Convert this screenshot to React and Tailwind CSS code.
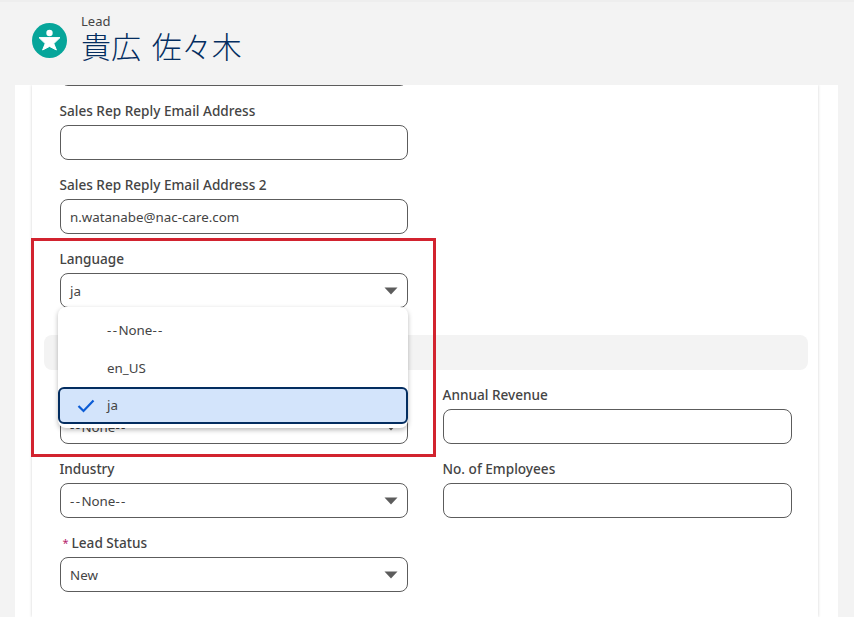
const font = { fontFamily: '"Noto Sans", "Noto Sans CJK JP", sans-serif' };

function Value({ text }) {
  if (text === "--None--") {
    return (
      <span>
        <span className="tracking-[1.4px]">--</span>None<span className="tracking-[1.4px]">--</span>
      </span>
    );
  }
  return <span>{text}</span>;
}

function Label({ children, required }) {
  return (
    <div className="h-[15px] mb-[7px] -ml-[0.5px] flex items-center text-[13.6px] leading-[15px] font-medium text-[#444444] whitespace-nowrap">
      {required && <span className="text-[#b5246a] text-[11px] ml-[3px] mr-[3px] font-normal">*</span>}
      {children}
    </div>
  );
}

function Caret() {
  return (
    <svg width="14" height="8" viewBox="0 0 14 8" className="shrink-0">
      <path d="M0.5 0.5H13.5L7 7.5Z" fill="#5c5c5c" />
    </svg>
  );
}

function Box({ value, select }) {
  return (
    <div className="h-[35px] w-full rounded-[8px] border border-[#5c5c5c] bg-white pl-[9px] pr-[9px] pt-px flex items-center justify-between text-[13.35px] text-[#444444]">
      <Value text={value} />
      {select && <Caret />}
    </div>
  );
}

function Field({ label, value, select, required }) {
  return (
    <div className="mb-[17px]">
      <Label required={required}>{label}</Label>
      <Box value={value} select={select} />
    </div>
  );
}

function Option({ children, selected }) {
  return (
    <div
      className={
        selected
          ? "h-[37px] flex items-center rounded-[6px] border-2 border-[#032d60] bg-[#d3e4fb] text-[13.35px] text-[#444444]"
          : "h-[38px] pt-px flex items-center text-[13.35px] text-[#444444]"
      }
    >
      <span className={selected ? "w-[47px] pl-[17px] flex" : "w-[49px]"}>
        {selected && (
          <svg width="18" height="14" viewBox="0 0 18 14">
            <path d="M1.5 7L6.5 12L16.5 1.5" fill="none" stroke="#0b5cd5" strokeWidth="2.2" />
          </svg>
        )}
      </span>
      <Value text={children} />
    </div>
  );
}

export default function App() {
  return (
    <div style={font} className="relative h-[617px] w-[854px] overflow-hidden bg-[#f3f3f3]">
      <header className="relative z-10 h-[85px] bg-[#f3f3f3] border-t-2 border-[#eeeeee] flex pl-[32px]">
        <div className="mt-[21px] h-[35px] w-[35px] shrink-0">
          <svg width="35" height="35" viewBox="0 0 35 35">
            <circle cx="17.5" cy="17.5" r="17.5" fill="#06a59a" />
            <circle cx="17.5" cy="10" r="3.2" fill="#ffffff" />
            <path d="M7 14.6H28L21.8 20.6L24.4 27L17.5 23.4L10.6 27L13.2 20.6Z" fill="#ffffff" strokeLinejoin="round" stroke="#ffffff" strokeWidth="1" />
          </svg>
        </div>
        <div className="ml-[14px] pt-[11px]">
          <div className="text-[13px] leading-[16px] text-[#444444]">Lead</div>
          <div className="text-[30px] leading-[36px] font-light text-[#032d60] whitespace-nowrap [word-spacing:3px]">貴広 佐々木</div>
        </div>
      </header>

      <main className="ml-[15px] w-[823px] h-[532px] bg-white pl-[17px] pr-[19px]">
        <div className="h-full w-[786px] shadow-[0_0_3px_rgba(0,0,0,0.18)] pl-[28px] pr-[26px] overflow-hidden">
          <div className="-mt-[34px] mb-[17px] relative z-0">
            <div className="w-[348px]"><Box value="" /></div>
          </div>
          <div className="w-[348px]">
            <Field label="Sales Rep Reply Email Address" value="" />
            <Field label="Sales Rep Reply Email Address 2" value="n.watanabe@nac-care.com" />
            <Field label="Language" value="ja" select />
          </div>
          <div className="-ml-[16px] -mr-[16px] mt-[27px] h-[35px] rounded-[8px] bg-[#f3f3f3] mb-[17px]" />
          <div className="grid grid-cols-[348px_349px] gap-x-[35px]">
            <Field label="Lead Source" value="--None--" select />
            <Field label="Annual Revenue" value="" />
            <Field label="Industry" value="--None--" select />
            <Field label="No. of Employees" value="" />
            <Field label="Lead Status" value="New" select required />
          </div>
        </div>
      </main>

      <div className="absolute left-[58px] top-[307px] w-[350px] h-[121px] z-20 rounded-[8px] bg-white shadow-[0_2px_5px_rgba(0,0,0,0.28)] pt-[4px]">
        <Option>--None--</Option>
        <Option>en_US</Option>
        <Option selected>ja</Option>
      </div>

      <div className="absolute left-[31px] top-[238px] w-[405px] h-[219px] z-30 border-[3px] border-[#d2232f]" />
    </div>
  );
}
